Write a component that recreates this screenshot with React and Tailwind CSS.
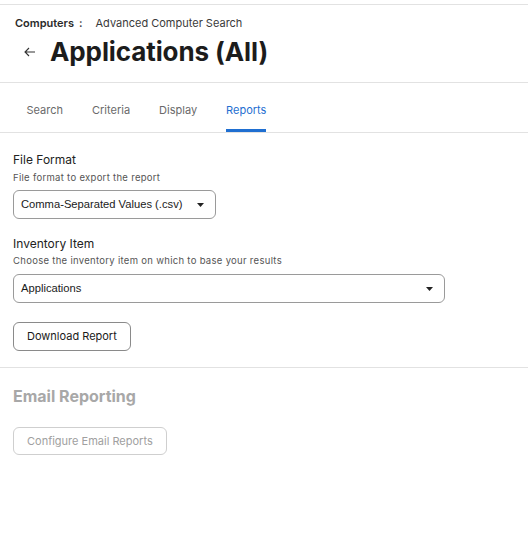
import React from 'react'

const font = { fontFamily: 'Inter, "Liberation Sans", sans-serif' }

function Caret() {
  return (
    <svg width="7" height="4" viewBox="0 0 7 4" className="shrink-0">
      <path d="M0 0h7L3.5 4z" fill="#222" />
    </svg>
  )
}

function Select({ value, className }) {
  return (
    <div className={`flex items-center justify-between h-[29px] pl-[7px] pr-[11px] border border-[#9a9a9a] rounded-[6px] text-[11.2px] text-[#1a1a1a] ${className}`}>
      <span className="[font-family:'Liberation_Sans',Arial,sans-serif]">{value}</span>
      <Caret />
    </div>
  )
}

export default function App() {
  const tabs = ['Search', 'Criteria', 'Display', 'Reports']
  return (
    <div className="w-[528px] h-[533px] bg-white text-[#1f1f1f]" style={font}>
      <div className="h-[4px]" />
      <div className="border-t border-[#e2e2e2] pt-[11px] pb-[14px] px-[15px]">
        <div className="flex items-center text-[11px] h-[14px]">
          <span className="font-semibold text-[#2a2a2a]">Computers</span>
          <span className="ml-[5px] font-semibold text-[#444]">:</span>
          <span className="ml-[13px] text-[#3a3a3a]">Advanced Computer Search</span>
        </div>
        <div className="flex items-center mt-[6px] h-[32px]">
          <svg width="12" height="10" viewBox="0 0 12 10" className="ml-[9px]">
            <path d="M11 5H1.5M5 1L1 5l4 4" fill="none" stroke="#333" strokeWidth="1.1" />
          </svg>
          <h1 className="ml-[14px] text-[26px] font-bold text-[#1c1c1c] leading-none tracking-[-0.1px]">Applications (All)</h1>
        </div>
      </div>
      <div className="border-t border-[#e2e2e2] border-b flex pl-[12px] h-[51px]">
        {tabs.map((t) => (
          <div
            key={t}
            className={`relative px-[14.5px] flex items-center pt-[6px] text-[11px] ${t === 'Reports' ? 'text-[#1f6fd1]' : 'text-[#6a6a6a]'}`}
          >
            {t}
            {t === 'Reports' && <div className="absolute left-[14.5px] right-[14.5px] bottom-0 h-[3px] bg-[#1f6fd1]" />}
          </div>
        ))}
      </div>
      <div className="px-[13px] pt-[19px] pb-[16px] border-b border-[#e2e2e2]">
        <div className="text-[12px] text-[#222] leading-[16px]">File Format</div>
        <div className="text-[9.5px] text-[#555] mt-[4px] leading-[12px] tracking-[0.3px]">File format to export the report</div>
        <Select value="Comma-Separated Values (.csv)" className="w-[203px] mt-[6px]" />
        <div className="text-[12px] text-[#222] leading-[16px] mt-[17px]">Inventory Item</div>
        <div className="text-[9.5px] text-[#555] mt-[3px] leading-[12px] tracking-[0.3px]">Choose the inventory item on which to base your results</div>
        <Select value="Applications" className="w-[432px] mt-[7px]" />
        <button className="mt-[19px] h-[29px] px-[13px] border border-[#8a8a8a] rounded-[6px] text-[11px] text-[#1a1a1a] bg-white">
          Download Report
        </button>
      </div>
      <div className="px-[13px] pt-[18px]">
        <div className="text-[16px] font-bold text-[#a8a8a8] leading-[20px]">Email Reporting</div>
        <button className="mt-[21px] h-[28px] px-[13px] border border-[#cfcfcf] rounded-[6px] text-[11px] text-[#a0a0a0] bg-white">
          Configure Email Reports
        </button>
      </div>
    </div>
  )
}
